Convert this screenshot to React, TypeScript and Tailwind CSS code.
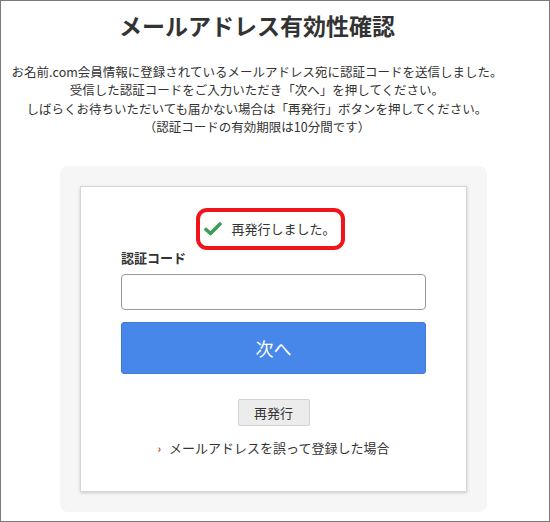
export default function App() {
  return (
    <div
      className="w-[550px] h-[522px] border border-[#7a7a7a] bg-white text-[#333] overflow-hidden"
      style={{ fontFamily: '"Noto Sans CJK JP", "Noto Sans", sans-serif' }}
    >
      {/* Header */}
      <div className="pr-[36px] pt-[9px] text-center">
        <h1 className="text-[23px] leading-[30px] font-bold text-[#333]">メールアドレス有効性確認</h1>
        <div className="mt-[23px] text-[12.5px] leading-[18.3px] whitespace-nowrap">
          <p>お名前.com会員情報に登録されているメールアドレス宛に認証コードを送信しました。</p>
          <p>受信した認証コードをご入力いただき「次へ」を押してください。</p>
          <p>しばらくお待ちいただいても届かない場合は「再発行」ボタンを押してください。</p>
          <p>（認証コードの有効期限は10分間です）</p>
        </div>
      </div>

      {/* Panel */}
      <div className="ml-[59px] mt-[30px] w-[427px] bg-[#f6f6f6] rounded-lg p-[20px]">
        <div className="bg-white border border-[#d6d6d6] shadow-[0_1px_3px_rgba(0,0,0,0.18)] px-[40px] pt-[21px] pb-[34px]">
          <div className="flex justify-center">
            <div className="inline-flex items-center h-[42px] pl-[4px] pr-[5px] border-[4px] border-[#f0141b] rounded-[11px] -translate-x-[3px]">
              <svg width="18" height="14" viewBox="0 0 18 14" className="mr-[9px]">
                <polyline
                  points="2,7.5 6.5,11.5 16,2"
                  fill="none"
                  stroke="#3d9e5a"
                  strokeWidth="3.6"
                  strokeLinecap="round"
                  strokeLinejoin="round"
                />
              </svg>
              <span className="text-[13px] leading-[18px]">再発行しました。</span>
            </div>
          </div>

          <label className="block text-[13px] leading-[16px] font-bold mt-0">認証コード</label>
          <input
            type="text"
            className="block w-full h-[36px] mt-[8px] border border-[#9a9a9a] rounded-[4px] px-2 text-[14px] outline-none"
          />
          <button className="block w-full h-[52px] mt-[12px] bg-[#4787ea] border border-[#3f7ad8] rounded-[3px] text-white text-[18px]">
            次へ
          </button>

          <div className="flex justify-center mt-[25px]">
            <button className="w-[72px] h-[27px] bg-[#ececec] border border-[#d2d2d2] rounded-[2px] text-[13px] text-[#333]">
              再発行
            </button>
          </div>

          <div className="flex justify-center items-center mt-[13px] text-[13px] leading-[18px]">
            <span className="text-[#c0392b] text-[11px] font-bold mr-[8px]">›</span>
            <span>メールアドレスを誤って登録した場合</span>
          </div>
        </div>
      </div>
    </div>
  )
}
